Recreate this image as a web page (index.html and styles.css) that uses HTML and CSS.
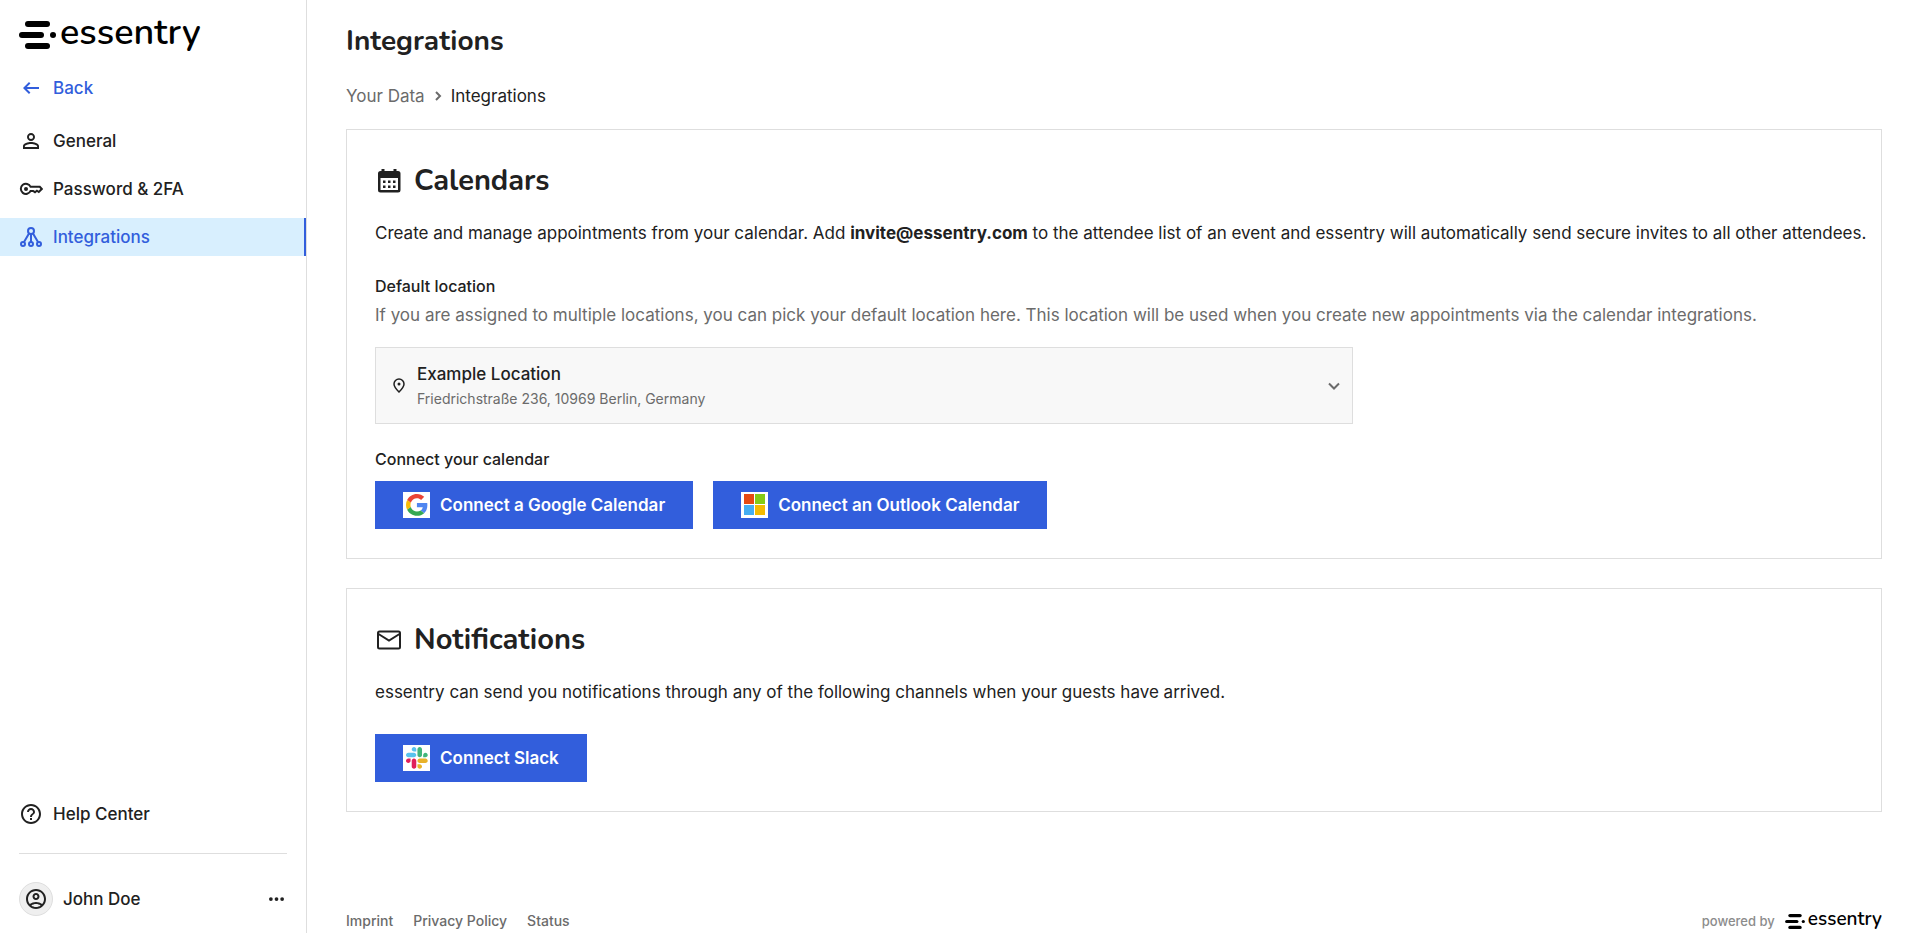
FILE: index.html
```html
<!DOCTYPE html>
<html lang="en">
<head>
  <meta charset="UTF-8">
  <meta name="viewport" content="width=device-width, initial-scale=1">
  <title>Integrations - essentry</title>
  <link rel="stylesheet" href="styles.css">
</head>
<body>
  <!-- Sidebar -->
  <aside class="sidebar">
    <a class="logo" href="#">
      <svg class="logo-mark" viewBox="0 0 37 28">
        <rect x="6" y="0" width="25" height="6" rx="3"/>
        <rect x="0" y="11" width="25" height="6" rx="3"/>
        <circle cx="34" cy="14" r="3"/>
        <rect x="6" y="22" width="25" height="6" rx="3"/>
      </svg>
      <span>essentry</span>
    </a>

    <a class="nav-item back" href="#">
      <svg class="icon" viewBox="0 0 24 24"><path d="M20 11H7.830l3.580-3.590L10 6l-6 6 6 6 1.410-1.410L7.830 13H20v-2z"/></svg>
      Back
    </a>

    <nav class="nav">
      <a class="nav-item" href="#">
        <svg class="icon" viewBox="0 0 24 24"><path d="M12 5.900a2.100 2.100 0 1 1 0 4.200 2.100 2.100 0 0 1 0-4.200m0 9c2.970 0 6.100 1.460 6.100 2.100v1.100H5.900V17c0-.64 3.130-2.100 6.100-2.100M12 4C9.790 4 8 5.790 8 8s1.790 4 4 4 4-1.790 4-4-1.790-4-4-4zm0 9c-2.670 0-8 1.340-8 4v3h16v-3c0-2.660-5.330-4-8-4z"/></svg>
        General
      </a>
      <a class="nav-item" href="#">
        <svg class="icon" viewBox="0 0 24 24">
          <path class="line" d="M11.600 9.800h9.200l2 2.200-3 3-1.900-1.300-1.900 1.500-1.900-1.300h-2.500A5.100 5.100 0 1 1 11.600 9.800z"/>
          <circle cx="7" cy="12" r="2"/>
        </svg>
        Password &amp; 2FA
      </a>
      <a class="nav-item active" href="#">
        <svg class="icon" viewBox="0 0 24 24">
          <g class="line">
            <circle cx="12" cy="6" r="3"/>
            <circle cx="4" cy="19" r="2"/>
            <circle cx="12" cy="19" r="2"/>
            <circle cx="20" cy="19" r="2"/>
            <path d="M12 9v8M10 8.500L5 17M14 8.500L19 17"/>
          </g>
        </svg>
        Integrations
      </a>
    </nav>

    <div class="sidebar-bottom">
      <a class="nav-item" href="#">
        <svg class="icon" viewBox="0 0 24 24"><path d="M11 18h2v-2h-2v2zm1-16C6.480 2 2 6.480 2 12s4.480 10 10 10 10-4.480 10-10S17.520 2 12 2zm0 18c-4.410 0-8-3.590-8-8s3.590-8 8-8 8 3.590 8 8-3.590 8-8 8zm0-14c-2.210 0-4 1.790-4 4h2c0-1.100.9-2 2-2s2 .9 2 2c0 2-3 1.750-3 5h2c0-2.250 3-2.500 3-5 0-2.210-1.790-4-4-4z"/></svg>
        Help Center
      </a>
      <hr>
      <div class="user">
        <span class="avatar">
          <svg class="icon" viewBox="0 0 24 24"><path d="M12 2C6.480 2 2 6.480 2 12s4.480 10 10 10 10-4.480 10-10S17.520 2 12 2zM7.350 18.500C8.660 17.560 10.260 17 12 17s3.340.56 4.650 1.500C15.340 19.440 13.740 20 12 20s-3.340-.56-4.650-1.500zm10.790-1.380C16.450 15.800 14.320 15 12 15s-4.450.8-6.140 2.120C4.700 15.730 4 13.950 4 12c0-4.420 3.580-8 8-8s8 3.580 8 8c0 1.950-.7 3.730-1.860 5.120zM12 6c-1.930 0-3.500 1.570-3.500 3.500S10.070 13 12 13s3.500-1.570 3.500-3.500S13.930 6 12 6zm0 5c-.83 0-1.500-.67-1.500-1.500S11.170 8 12 8s1.500.67 1.500 1.500S12.830 11 12 11z"/></svg>
        </span>
        <span class="user-name">John Doe</span>
        <button type="button" class="more" aria-label="More">
          <svg viewBox="0 0 16 4"><circle cx="2" cy="2" r="2"/><circle cx="8" cy="2" r="2"/><circle cx="14" cy="2" r="2"/></svg>
        </button>
      </div>
    </div>
  </aside>

  <!-- Content -->
  <main class="main">
    <h1>Integrations</h1>
    <div class="breadcrumb">
      <a href="#">Your Data</a>
      <svg viewBox="0 0 8 10"><path d="M2 1l4 4-4 4"/></svg>
      <span>Integrations</span>
    </div>

    <section class="card">
      <h2>
        <svg viewBox="0 0 28 28"><path fill-rule="evenodd" d="M6.500 2h3v2h9V2h3v2H23q2.500 0 2.500 2.500V23q0 2.500-2.500 2.500H5.500Q3 25.500 3 23V6.500Q3 4 5.500 4h1zM5.500 11v12h17.500V11zM8 13.500h2.500V16H8zm5 0h2.500V16H13zm5 0h2.500V16H18zM8 18.500h2.500V21H8zm5 0h2.500V21H13zm5 0h2.500V21H18z"/></svg>
        Calendars
      </h2>
      <p>Create and manage appointments from your calendar. Add <b>invite@essentry.com</b> to the attendee list of an event and essentry will automatically send secure invites to all other attendees.</p>

      <label class="label" for="location">Default location</label>
      <p class="hint">If you are assigned to multiple locations, you can pick your default location here. This location will be used when you create new appointments via the calendar integrations.</p>
      <div class="location">
        <select id="location" name="location">
          <option>Example Location</option>
        </select>
        <span class="address">Friedrichstraße 236, 10969 Berlin, Germany</span>
        <svg class="pin" viewBox="0 0 12 15"><path d="M6 1a5 5 0 0 1 5 5c0 3-2.500 5.500-5 8-2.500-2.500-5-5-5-8a5 5 0 0 1 5-5z"/><circle cx="6" cy="6" r="1.500"/></svg>
        <svg class="chevron" viewBox="0 0 12 8"><path d="M1 1.500l5 5 5-5"/></svg>
      </div>

      <div class="label">Connect your calendar</div>
      <div class="buttons">
        <button type="button" class="btn">
          <svg viewBox="0 0 27 26">
            <rect width="27" height="26" fill="#fff"/>
            <g transform="translate(3 2) scale(.455)">
              <path fill="#ea4335" d="M24 9.500c3.540 0 6.710 1.220 9.210 3.600l6.850-6.850C35.900 2.380 30.470 0 24 0 14.620 0 6.510 5.380 2.560 13.220l7.980 6.190C12.430 13.720 17.740 9.500 24 9.500z"/>
              <path fill="#4f86f0" d="M46.980 24.550c0-1.570-.15-3.090-.38-4.550H24v9.020h12.940c-.58 2.960-2.260 5.480-4.780 7.180l7.730 6c4.510-4.180 7.090-10.360 7.090-17.650z"/>
              <path fill="#fbbc05" d="M10.530 28.590c-.48-1.450-.76-2.990-.76-4.590s.27-3.140.76-4.590l-7.980-6.190C.92 16.460 0 20.120 0 24c0 3.880.92 7.540 2.560 10.780l7.970-6.190z"/>
              <path fill="#34a853" d="M24 48c6.480 0 11.930-2.130 15.890-5.810l-7.730-6c-2.150 1.450-4.920 2.300-8.160 2.300-6.260 0-11.570-4.220-13.470-9.910l-7.980 6.190C6.510 42.620 14.620 48 24 48z"/>
            </g>
          </svg>
          Connect a Google Calendar
        </button>
        <button type="button" class="btn">
          <svg viewBox="0 0 27 26">
            <rect width="27" height="26" fill="#fff"/>
            <rect x="3" y="2" width="10" height="10" fill="#e64a12"/>
            <rect x="14" y="2" width="10" height="10" fill="#84cb16"/>
            <rect x="3" y="13" width="10" height="10" fill="#45adf2"/>
            <rect x="14" y="13" width="10" height="10" fill="#f4ba00"/>
          </svg>
          Connect an Outlook Calendar
        </button>
      </div>
    </section>

    <section class="card">
      <h2>
        <svg viewBox="0 0 28 28"><path class="mail" d="M4.500 5.500h19q1.500 0 1.500 1.500v14q0 1.500-1.500 1.500h-19Q3 22.500 3 21V7q0-1.500 1.500-1.500zM3.500 8L14 14.500 24.500 8"/></svg>
        Notifications
      </h2>
      <p>essentry can send you notifications through any of the following channels when your guests have arrived.</p>
      <div class="buttons">
        <button type="button" class="btn">
          <svg viewBox="0 0 27 26">
            <rect width="27" height="26" fill="#fff"/>
            <g transform="translate(3 2) scale(.177)">
              <path fill="#e01e5a" d="M25.800 77.600c0 7.100-5.800 12.900-12.900 12.900S0 84.700 0 77.600s5.800-12.900 12.900-12.900h12.900v12.900zM32.300 77.600c0-7.100 5.800-12.900 12.900-12.900s12.900 5.800 12.900 12.900v32.300c0 7.100-5.800 12.900-12.900 12.900s-12.900-5.800-12.900-12.900V77.600z"/>
              <path fill="#58c3ee" d="M45.200 25.800c-7.100 0-12.900-5.800-12.900-12.900S38.100 0 45.200 0s12.900 5.800 12.900 12.900v12.900H45.200zM45.200 32.300c7.100 0 12.900 5.800 12.900 12.900s-5.800 12.900-12.900 12.900H12.900C5.800 58.100 0 52.300 0 45.200s5.800-12.900 12.900-12.900h32.300z"/>
              <path fill="#40b57c" d="M97 45.200c0-7.100 5.800-12.900 12.900-12.900s12.900 5.800 12.900 12.900-5.800 12.900-12.900 12.900H97V45.200zM90.500 45.200c0 7.100-5.800 12.900-12.900 12.900s-12.900-5.800-12.900-12.900V12.900C64.700 5.800 70.500 0 77.600 0s12.900 5.800 12.900 12.900v32.300z"/>
              <path fill="#e8b22a" d="M77.600 97c7.100 0 12.900 5.800 12.900 12.900s-5.800 12.900-12.900 12.900-12.900-5.800-12.900-12.900V97h12.900zM77.600 90.500c-7.100 0-12.900-5.800-12.900-12.900s5.800-12.900 12.900-12.900h32.300c7.100 0 12.900 5.800 12.900 12.900s-5.800 12.900-12.900 12.900H77.600z"/>
            </g>
          </svg>
          Connect Slack
        </button>
      </div>
    </section>

    <footer class="footer">
      <a href="#">Imprint</a>
      <a href="#">Privacy Policy</a>
      <a href="#">Status</a>
      <span class="powered">powered by</span>
      <a class="logo logo-small" href="#">
        <svg class="logo-mark" viewBox="0 0 37 28">
          <rect x="6" y="0" width="25" height="6" rx="3"/>
          <rect x="0" y="11" width="25" height="6" rx="3"/>
          <circle cx="34" cy="14" r="3"/>
          <rect x="6" y="22" width="25" height="6" rx="3"/>
        </svg>
        <span>essentry</span>
      </a>
    </footer>
  </main>
</body>
</html>
```
FILE: styles.css
```css
* { box-sizing: border-box; }
body { margin: 0; min-height: 100vh; display: flex; font-family: Inter, sans-serif; font-size: 17px; line-height: 24px; color: #212121; background: #fff; }
a { color: inherit; text-decoration: none; }
h1, h2, p { margin: 0; }
h1, h2 { font-family: Nunito, Lato, sans-serif; font-size: 28px; line-height: 36px; font-weight: 700; }
h2 { font-size: 29px; }
svg { flex: none; fill: currentColor; }

/* Logo */
.logo { display: flex; align-items: center; gap: 4px; color: #000; font-family: Nunito, Lato, sans-serif; font-size: 36px; line-height: 36px; font-weight: 600; }
.logo-mark { width: 37px; height: 28px; }
.logo span { margin-top: -4px; }
.logo-small { gap: 3px; font-size: 19px; line-height: 24px; }
.logo-small .logo-mark { width: 20px; height: 15px; }

/* Sidebar */
.sidebar { width: 307px; flex: none; display: flex; flex-direction: column; border-right: 1px solid #dedede; }
.sidebar .logo { margin: 19px 19px 18px; }
.nav-item { display: flex; align-items: center; gap: 10px; height: 38px; padding: 0 19px; font-weight: 500; }
.icon { width: 24px; height: 24px; }
.line { fill: none; stroke: currentColor; stroke-width: 2; }
.back { color: #325edc; margin-bottom: 15px; }
.nav { display: flex; flex-direction: column; gap: 10px; }
.active { color: #325edc; background: #d8effe; border-right: 2px solid #325edc; }
.sidebar-bottom { margin-top: auto; padding-bottom: 17px; }
.sidebar-bottom hr { margin: 20px 19px 28px; border: 0; border-top: 1px solid #dedede; }
.user { display: flex; align-items: center; gap: 10px; padding: 0 19px; font-weight: 500; }
.avatar { display: flex; align-items: center; justify-content: center; width: 34px; height: 34px; border: 1px solid #dedede; border-radius: 50%; background: #efefef; }
.more { display: flex; margin-left: auto; padding: 8px 3px; border: 0; background: none; color: inherit; cursor: pointer; }
.more svg { width: 15px; height: 4px; }

/* Content */
.main { flex: 1; min-width: 0; display: flex; flex-direction: column; padding: 23px 30px 0 39px; }
.breadcrumb { display: flex; align-items: center; gap: 9px; margin: 25px 0 21px; }
.breadcrumb a { color: #6b6b6b; }
.breadcrumb svg { width: 8px; height: 10px; fill: none; stroke: #6b6b6b; stroke-width: 2; }
.card { padding: 33px 12px 29px 28px; margin-bottom: 29px; border: 1px solid #dedede; }
.card h2 { display: flex; align-items: center; gap: 11px; margin-bottom: 22px; }
.card h2 svg { width: 28px; height: 28px; }
.mail { fill: none; stroke: currentColor; stroke-width: 2; }
.label { display: block; margin-bottom: 5px; font-size: 16px; font-weight: 500; }
p + .label { margin-top: 29px; }
.card .hint { color: #6b6b6b; }

.location { position: relative; max-width: 978px; margin: 20px 0 23px; }
.location select { display: block; width: 100%; height: 77px; padding: 0 40px 24px 41px; border: 1px solid #dedede; border-radius: 0; background: #f8f8f8; color: inherit; font: inherit; font-weight: 500; appearance: none; }
.location .address { position: absolute; left: 42px; bottom: 13px; font-size: 14px; color: #6b6b6b; pointer-events: none; }
.location .pin { position: absolute; left: 18px; top: 31px; width: 12px; height: 15px; pointer-events: none; }
.pin path { fill: none; stroke: currentColor; stroke-width: 1.5; }
.location .chevron { position: absolute; right: 13px; top: 35px; width: 12px; height: 8px; fill: none; stroke: #6b6b6b; stroke-width: 2; pointer-events: none; }

.buttons { display: flex; flex-wrap: wrap; gap: 20px; margin-top: 10px; }
p + .buttons { margin-top: 30px; }
.btn { display: flex; align-items: center; gap: 10px; height: 48px; padding: 0 28px; border: 0; background: #325edc; color: #fff; font: inherit; font-weight: 600; cursor: pointer; }
.btn:hover { background: #284fc0; }
.btn svg { width: 27px; height: 26px; }

.footer { display: flex; align-items: center; gap: 20px; margin-top: auto; font-size: 14px; font-weight: 500; color: #6b6b6b; }
.powered { margin-left: auto; margin-right: -10px; color: #8c8c8c; font-size: 13px; }
```
